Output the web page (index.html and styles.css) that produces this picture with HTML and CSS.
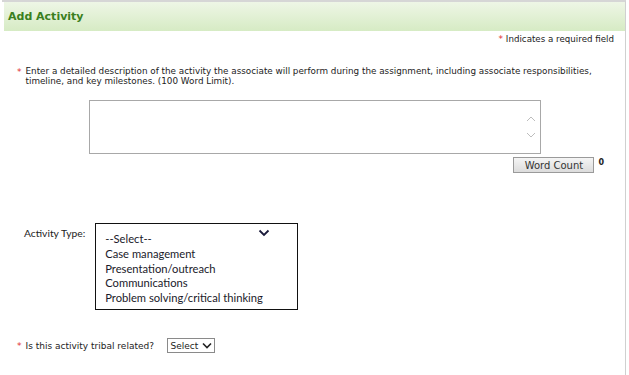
FILE: index.html
```html
<!DOCTYPE html>
<html lang="en">
<head>
    <meta charset="UTF-8">
    <title>Add Activity</title>
    <link rel="stylesheet" href="styles.css">
</head>
<body>
    <div class="page">
        <div class="panel-header">Add Activity</div>

        <p class="required-note"><span class="req">*</span> Indicates a required field</p>

        <div class="question">
            <span class="req">*</span>
            <p>Enter a detailed description of the activity the associate will perform during the assignment, including associate responsibilities, timeline, and key milestones. (100 Word Limit).</p>
        </div>

        <div class="desc-box">
            <div class="fake-textarea">
                <div class="scroll-arrows">
                    <svg width="10" height="8" viewBox="0 0 10 8"><path d="M1 6 L5 2 L9 6" fill="none" stroke="#bdbdbd" stroke-width="1"/></svg>
                    <svg width="10" height="8" viewBox="0 0 10 8"><path d="M1 2 L5 6 L9 2" fill="none" stroke="#bdbdbd" stroke-width="1"/></svg>
                </div>
            </div>
            <div class="count-row">
                <button class="btn">Word Count</button>
                <span class="count">0</span>
            </div>
        </div>

        <div class="type-row">
            <span class="type-label">Activity Type:</span>
            <div class="listbox">
                <svg class="chev" width="12" height="8" viewBox="0 0 12 8"><path d="M1.5 1.5 L6 6 L10.5 1.5" fill="none" stroke="#1a1a3a" stroke-width="1.8"/></svg>
                <ul>
                    <li>--Select--</li>
                    <li>Case management</li>
                    <li>Presentation/outreach</li>
                    <li>Communications</li>
                    <li>Problem solving/critical thinking</li>
                </ul>
            </div>
        </div>

        <div class="tribal-row">
            <span class="req">*</span>
            <span class="tribal-label">Is this activity tribal related?</span>
            <div class="mini-select">
                Select
                <svg width="10" height="7" viewBox="0 0 10 7"><path d="M1 1.5 L5 5.5 L9 1.5" fill="none" stroke="#222" stroke-width="1.6"/></svg>
            </div>
        </div>
    </div>
</body>
</html>
```

FILE: styles.css
```css
/* page frame */
body {
    margin: 0;
    font-family: "DejaVu Sans", Verdana, sans-serif;
    font-size: 9px;
    color: #222;
    background: #fff;
}

.page {
    width: 624px;
    height: 375px;
    margin-left: 2px;
    border-top: 2px solid #d6d6d6;
    border-right: 1px solid #d0d0d0;
    box-sizing: border-box;
}

/* green title bar */
.panel-header {
    margin-left: 2px;
    height: 29px;
    padding-left: 4px;
    display: flex;
    align-items: center;
    font-size: 11px;
    font-weight: bold;
    color: #3a7f20;
    background: linear-gradient(#eef6e6, #d6ebc4);
}

.req {
    color: #e03030;
    font-size: 9px;
}

.required-note {
    margin: 3px 11px 0 0;
    text-align: right;
    font-size: 8.7px;
    line-height: 11px;
}

/* description question */
.question {
    display: flex;
    gap: 4px;
    margin: 22px 0 0 15px;
}

.question p {
    margin: 0;
    width: 575px;
    line-height: 9.5px;
    font-size: 8.8px;
}

.desc-box {
    width: 515px;
    margin: 14px 0 0 87px;
}

.fake-textarea {
    height: 54px;
    width: 452px;
    border: 1px solid #a8a8a8;
    box-sizing: border-box;
    display: flex;
    justify-content: flex-end;
}

.scroll-arrows {
    display: flex;
    flex-direction: column;
    justify-content: center;
    gap: 8px;
    padding-right: 4px;
}

.count-row {
    display: flex;
    justify-content: flex-end;
    align-items: flex-start;
    gap: 4px;
    margin-top: 3px;
}

.btn {
    font-family: "DejaVu Sans", Verdana, sans-serif;
    font-size: 10px;
    color: #333;
    height: 16px;
    width: 81px;
    padding: 0;
    border: 1px solid #9a9a9a;
    background: linear-gradient(#f5f5f5, #dcdcdc);
}

.count {
    font-weight: bold;
    font-size: 8px;
    margin-top: 1px;
}

/* activity type list */
.type-row {
    display: flex;
    gap: 10px;
    margin: 50px 0 0 22px;
    font-family: Lato, "Open Sans", sans-serif;
}

.type-label {
    font-size: 10.3px;
    margin-top: 4px;
}

.listbox {
    position: relative;
    width: 203px;
    height: 87px;
    border: 1px solid #111;
    box-sizing: border-box;
}

.chev {
    position: absolute;
    top: 5px;
    right: 27px;
}

.listbox ul {
    list-style: none;
    margin: 0;
    padding: 8px 0 0 9px;
    font-size: 11.2px;
    line-height: 14.8px;
    color: #1a1a2a;
}

/* tribal question */
.tribal-row {
    display: flex;
    align-items: center;
    margin: 28px 0 0 15px;
}

.tribal-label {
    margin-left: 4px;
    width: 141px;
}

.mini-select {
    display: flex;
    align-items: center;
    gap: 4px;
    height: 15px;
    padding: 0 2px 0 3px;
    border: 1px solid #8a8a8a;
    box-sizing: border-box;
    font-size: 9px;
}
```
